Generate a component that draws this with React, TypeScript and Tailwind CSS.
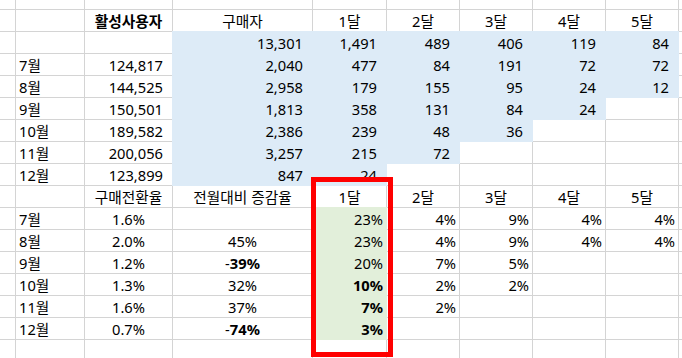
import type { ReactNode } from 'react';

type Cell = { t?: ReactNode; a?: 'l' | 'c' | 'n' | 'p'; fill?: 'blue' | 'green'; bold?: boolean };

const font = { fontFamily: '"Noto Sans", "Noto Sans CJK KR", sans-serif' };

function neg(v: string) {
  return (
    <>
      -<b className="font-bold">{v}</b>
    </>
  );
}

const e: Cell = {};
const B = (t: string): Cell => ({ t, a: 'n', fill: 'blue' });
const G = (t: string, bold = false): Cell => ({ t, a: 'p', fill: 'green', bold });
const P = (t: string): Cell => ({ t, a: 'p' });
const L = (t: string): Cell => ({ t, a: 'l' });
const C = (t: ReactNode, bold = false): Cell => ({ t, a: 'c', bold });
const N = (t: string): Cell => ({ t, a: 'n' });

const rows: Cell[][] = [
  [e, e, e, e, e, e, e, e, e, e],
  [e, e, C('활성사용자', true), C('구매자'), C('1달'), C('2달'), C('3달'), C('4달'), C('5달'), e],
  [e, e, e, B('13,301'), B('1,491'), B('489'), B('406'), B('119'), B('84'), e],
  [e, L('7월'), N('124,817'), B('2,040'), B('477'), B('84'), B('191'), B('72'), B('72'), e],
  [e, L('8월'), N('144,525'), B('2,958'), B('179'), B('155'), B('95'), B('24'), B('12'), e],
  [e, L('9월'), N('150,501'), B('1,813'), B('358'), B('131'), B('84'), B('24'), e, e],
  [e, L('10월'), N('189,582'), B('2,386'), B('239'), B('48'), B('36'), e, e, e],
  [e, L('11월'), N('200,056'), B('3,257'), B('215'), B('72'), e, e, e, e],
  [e, L('12월'), N('123,899'), B('847'), B('24'), e, e, e, e, e],
  [e, e, C('구매전환율'), C('전월대비 증감율'), C('1달'), C('2달'), C('3달'), C('4달'), C('5달'), e],
  [e, L('7월'), C('1.6%'), e, G('23%'), P('4%'), P('9%'), P('4%'), P('4%'), e],
  [e, L('8월'), C('2.0%'), C('45%'), G('23%'), P('4%'), P('9%'), P('4%'), P('4%'), e],
  [e, L('9월'), C('1.2%'), C(neg('39%')), G('20%'), P('7%'), P('5%'), e, e, e],
  [e, L('10월'), C('1.3%'), C('32%'), G('10%', true), P('2%'), P('2%'), e, e, e],
  [e, L('11월'), C('1.6%'), C('37%'), G('7%', true), P('2%'), e, e, e, e],
  [e, L('12월'), C('0.7%'), C(neg('74%')), G('3%', true), e, e, e, e, e],
  [e, e, e, e, e, e, e, e, e, e],
];

function SheetCell({ c }: { c: Cell }) {
  const fill = c.fill === 'blue' ? '-m-px bg-[#ddebf7]' : c.fill === 'green' ? '-m-px bg-[#e2efda]' : 'bg-white';
  const align =
    c.a === 'l'
      ? 'justify-start pl-[3px]'
      : c.a === 'c'
        ? 'justify-center'
        : c.a === 'n'
          ? c.fill ? 'justify-end pr-[10px]' : 'justify-end pr-[9px]'
          : c.fill ? 'justify-end pr-[4px]' : 'justify-end pr-[3px]';
  return (
    <div className={`flex items-center overflow-hidden whitespace-nowrap pt-px leading-none ${fill} ${align} ${c.bold ? 'font-bold' : ''}`}>
      {c.t}
    </div>
  );
}

export default function App() {
  return (
    <div className="relative h-[358px] w-[682px] overflow-hidden bg-white text-[14.7px] text-black" style={font}>
      <div className="grid h-full grid-cols-[15px_68px_87px_139px_73px_72px_72px_72px_72px_1fr] grid-rows-[9px_repeat(15,21px)_1fr] gap-px bg-[#d4d4d4]">
        {rows.map((r, i) => r.map((c, j) => <SheetCell key={`${i}-${j}`} c={c} />))}
      </div>
      <div className="pointer-events-none absolute left-[311px] top-[177px] h-[180px] w-[82px] border-[5px] border-[#ff0000]" />
    </div>
  );
}
